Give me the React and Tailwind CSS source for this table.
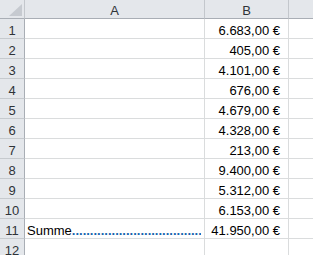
import React from "react";

const values = [
  "6.683,00 €",
  "405,00 €",
  "4.101,00 €",
  "676,00 €",
  "4.679,00 €",
  "4.328,00 €",
  "213,00 €",
  "9.400,00 €",
  "5.312,00 €",
  "6.153,00 €",
  "41.950,00 €",
  "",
];

export default function App() {
  const font = { fontFamily: '"Liberation Sans", Arial, sans-serif' };
  return (
    <div
      className="w-[313px] h-[255px] overflow-hidden bg-white text-[13px] text-black"
      style={font}
    >
      <div className="grid grid-cols-[25px_180px_84px_1fr] grid-rows-[19px_repeat(12,20px)]">
        {/* header row */}
        <div className="relative bg-[#e4e7eb] border-r border-b border-r-[#c3c7cc] border-b-[#a9aeb5]">
          <div className="absolute left-[9px] top-[4px] w-0 h-0 border-l-[13px] border-l-transparent border-b-[12px] border-b-[#c6cad0]" />
        </div>
        <div className="bg-[#e4e7eb] border-r border-b border-r-[#c3c7cc] border-b-[#a9aeb5] text-center leading-[17px] pt-[2px] text-[#2f3338]">
          A
        </div>
        <div className="bg-[#e4e7eb] border-r border-b border-r-[#c3c7cc] border-b-[#a9aeb5] text-center leading-[17px] pt-[2px] text-[#2f3338]">
          B
        </div>
        <div className="bg-[#e4e7eb] border-b border-b-[#a9aeb5]" />
        {values.map((v, i) => (
          <React.Fragment key={i}>
            <div className="bg-[#e4e7eb] border-r border-b border-r-[#a9aeb5] border-b-[#c6cace] text-center leading-[17px] pt-[3px] text-[#2f3338]">
              {i + 1}
            </div>
            <div className="border-r border-b border-[#dadcdd] leading-[17px] pt-[3px] pl-[2px] pr-[3px] overflow-hidden whitespace-nowrap">
              {i === 10 ? (
                <div className="flex">
                  <span>Summe</span>
                  <span className="flex-1 overflow-hidden font-bold text-[#1463ad]">
                    {".".repeat(60)}
                  </span>
                </div>
              ) : null}
            </div>
            <div className="border-r border-b border-[#dadcdd] leading-[17px] pt-[3px] pr-[8px] text-right whitespace-nowrap">
              {v}
            </div>
            <div className="border-b border-[#dadcdd]" />
          </React.Fragment>
        ))}
      </div>
    </div>
  );
}
